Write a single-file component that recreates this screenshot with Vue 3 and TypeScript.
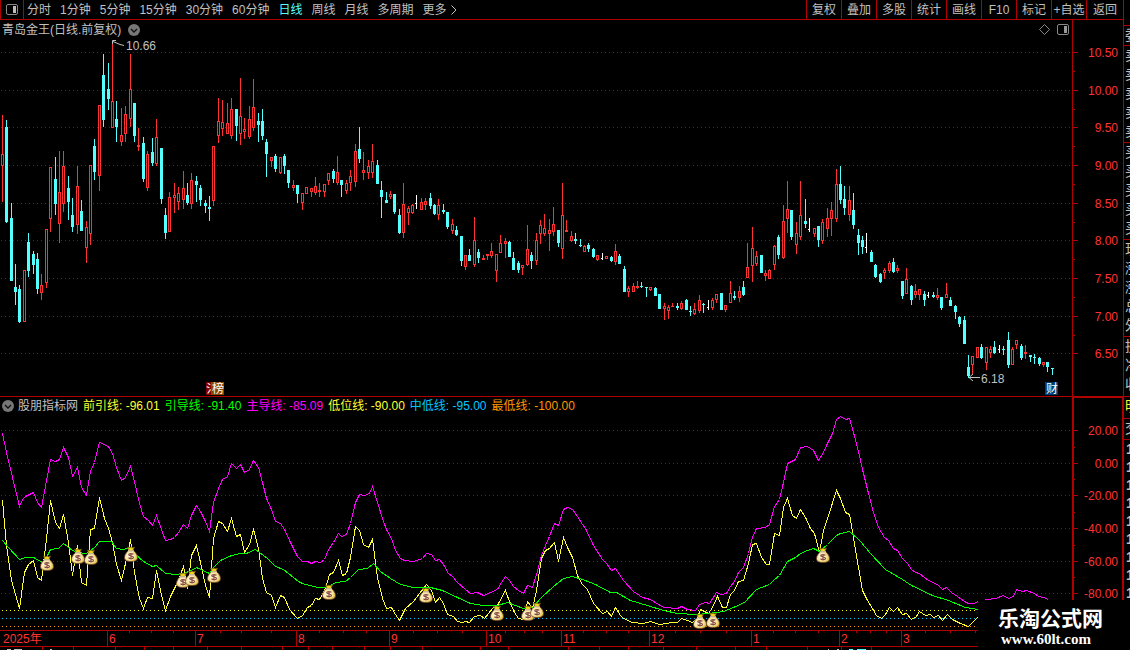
<script setup lang="ts">
type Kind = 'r' | 'c' | 'w'
interface Candle { kind: Kind; x: number; high: number; top: number; bottom: number; low: number }

const periods = ['分时', '1分钟', '5分钟', '15分钟', '30分钟', '60分钟', '日线', '周线', '月线', '多周期', '更多']
const tools = ['复权', '叠加', '多股', '统计', '画线', 'F10', '标记', '+自选', '返回']

// kind, high, body top, body bottom, low
const candleData = `
r 115 154 166 202|c 120 127 222 223|c 203 218 281 281|c 264 287 292 305|c 285 289 322 323|r 270 270 322 322|c 233 242 271 277|c 251 254 265 274|c 253 259 289 294|r 274 285 293 300|
r 229 229 283 288|r 167 167 219 232|c 157 179 204 215|r 151 192 224 243|r 151 166 204 212|c 176 188 202 220|c 198 215 227 232|r 166 186 225 234|c 200 211 231 231|r 221 227 248 263|
r 165 165 234 245|c 139 146 172 180|r 105 105 176 191|c 54 75 120 127|c 63 89 99 110|r 43 101 128 128|c 101 119 127 142|r 108 135 142 146|r 106 114 134 142|r 54 89 119 127|
c 103 103 136 142|r 128 145 147 151|c 137 143 179 182|r 151 154 188 191|c 138 152 163 166|r 119 137 164 166|c 148 148 199 204|c 208 215 233 239|r 192 197 232 232|r 183 195 198 213|
r 187 193 202 210|r 171 188 200 209|c 183 195 203 205|r 173 180 204 209|c 176 181 185 202|c 185 188 200 206|c 200 203 206 213|c 196 207 209 221|r 146 146 201 206|r 98 121 136 143|
r 100 122 129 136|r 103 123 134 134|r 98 109 136 139|c 109 109 126 141|r 78 116 134 145|r 118 129 132 139|r 106 119 137 139|r 79 107 128 131|c 113 121 125 142|c 109 121 136 140|
c 139 142 154 177|r 157 157 161 167|c 154 156 169 172|r 157 157 173 174|c 154 156 166 174|c 170 170 183 188|r 180 185 188 191|c 185 185 194 203|r 193 193 203 210|r 187 187 194 194|
r 188 188 192 197|r 177 186 193 195|r 183 190 192 197|r 184 184 192 197|r 173 173 181 185|c 169 171 179 183|r 156 172 183 185|c 180 180 185 197|r 180 183 191 194|r 170 176 183 191|
r 144 151 182 187|c 127 149 159 163|r 152 170 173 180|r 160 166 173 179|r 144 161 173 178|c 160 165 184 184|c 181 190 197 218|c 192 200 203 203|r 191 194 197 199|c 194 194 212 214|
c 209 215 233 234|r 183 204 233 238|r 206 208 213 225|r 204 205 213 214|w 195 203 204 209|r 198 202 210 210|r 198 201 205 210|c 193 198 206 209|c 204 205 214 215|r 199 205 215 220|
c 204 210 212 214|c 212 212 227 229|r 219 224 231 234|c 226 230 235 236|c 236 236 261 266|r 255 255 267 270|c 249 255 261 261|r 217 240 265 267|c 249 252 258 263|r 255 258 260 260|
r 254 254 256 260|r 243 251 256 258|r 254 254 271 282|r 235 243 253 253|r 238 241 244 258|c 241 242 257 257|c 252 258 270 270|c 261 263 270 273|r 265 265 268 275|r 225 249 265 266|
c 252 255 261 269|r 233 240 261 265|r 220 225 234 244|r 214 228 234 236|r 219 230 234 251|r 207 224 232 236|c 230 230 243 247|r 183 215 249 259|r 220 230 232 232|r 231 236 241 242|
c 233 239 241 244|c 239 245 246 247|r 245 246 252 252|c 243 245 249 252|c 248 249 257 258|r 255 255 260 261|w 253 258 259 260|r 256 256 259 259|c 256 257 261 262|r 244 251 262 265|
c 254 256 264 264|c 266 269 292 292|r 286 288 292 297|r 283 286 292 292|r 281 286 288 289|c 282 286 287 288|c 287 287 288 297|r 287 287 290 291|c 287 288 296 296|c 294 294 309 309|
r 303 306 309 320|r 305 307 311 319|r 303 306 307 307|c 303 306 308 310|r 301 303 309 310|c 299 300 310 310|c 306 311 312 316|r 303 309 314 315|r 295 300 311 313|c 303 304 305 313|
w 300 307 308 310|r 298 300 308 310|r 294 294 300 303|c 293 293 310 310|r 305 305 310 312|r 281 293 303 303|c 291 296 298 300|r 286 291 298 302|c 281 287 295 296|r 243 267 278 278|
r 227 248 266 282|r 251 256 264 266|c 255 255 273 273|r 270 273 276 281|r 269 270 279 279|r 245 246 265 270|c 235 237 255 259|r 205 221 258 259|r 181 209 219 233|c 210 210 237 240|
r 222 233 245 254|r 181 215 237 240|c 199 221 224 228|w 218 229 230 232|r 228 228 234 237|c 226 226 240 247|r 219 222 241 244|r 208 218 229 237|r 202 210 219 236|r 169 184 219 222|
c 166 184 200 204|c 186 199 208 215|r 186 200 215 221|c 193 210 225 229|c 229 235 243 255|c 236 240 247 254|w 233 247 248 253|c 250 252 262 262|c 264 265 277 278|c 273 274 282 283|
r 268 270 273 279|r 261 263 271 273|c 258 262 272 273|r 265 268 271 273|c 281 281 296 299|r 268 279 294 294|c 285 286 300 305|r 284 291 295 298|r 289 289 295 300|c 291 294 300 306|
w 292 295 296 298|c 292 295 297 298|r 288 295 298 300|c 297 297 308 310|r 283 294 298 298|c 297 300 306 306|c 305 306 312 319|c 316 317 324 327|c 316 320 344 344|c 355 367 376 378|
r 356 356 365 374|r 347 347 358 358|c 344 347 358 359|r 347 347 363 370|r 346 349 353 358|c 341 347 353 354|w 345 349 350 353|c 346 349 350 355|c 332 340 365 368|r 347 349 365 365|
r 340 340 345 349|c 344 346 358 360|r 345 352 354 359|c 355 355 357 362|c 354 357 358 364|c 357 358 364 366|r 362 362 365 367|c 362 362 367 372|c 368 368 369 375`

const candles: Candle[] = candleData.trim().split('|').map((row, i) => {
  const [kind, ...v] = row.trim().split(' ')
  const [high, top, bottom, low] = v.map(Number)
  return { kind: kind as Kind, x: Math.floor(2.2 + 4.412 * i), high, top, bottom, low }
})

function wicks(c: Candle): string {
  if (c.kind !== 'r') return `M${c.x} ${c.high}h1V${c.low}h-1z`
  return `M${c.x} ${c.high}h1V${c.top}h-1zM${c.x} ${c.bottom}h1V${c.low}h-1z`
}

// Hollow bodies are an outer ring minus the inner column.
function body(c: Candle): string {
  if (c.kind === 'w') return `M${c.x - 1} ${c.top}h2v1h-2z`
  const outer = `M${c.x - 1} ${c.top}h3V${c.bottom}h-3z`
  if (c.kind === 'c' || c.bottom - c.top < 3) return outer
  return `${outer}M${c.x} ${c.top + 1}h1V${c.bottom - 1}h-1z`
}

const path = (kind: Kind) => candles.filter(c => c.kind === kind).map(c => wicks(c)).join('')
const bodies = (kind: Kind) => candles.filter(c => c.kind === kind).map(c => body(c)).join('')
const layers = (['r', 'c', 'w'] as Kind[]).map(kind => ({ kind, wick: path(kind), body: bodies(kind) }))

const priceAxis = [
  { y: 52, t: '10.50' }, { y: 90, t: '10.00' }, { y: 127, t: '9.50' }, { y: 165, t: '9.00' }, { y: 203, t: '8.50' },
  { y: 240, t: '8.00' }, { y: 278, t: '7.50' }, { y: 316, t: '7.00' }, { y: 353, t: '6.50' },
]
const priceMinor = [71, 109, 146, 184, 222, 259, 297, 335]
const indAxis = [
  { y: 430, t: '20.00' }, { y: 463, t: '0.00' }, { y: 495, t: '-20.00' },
  { y: 528, t: '-40.00' }, { y: 561, t: '-60.00' }, { y: 593, t: '-80.00' },
]
const indMinor = [447, 479, 512, 545, 577]

const legend = [
  { cls: 'yellow', name: '前引线', value: '-96.01' },
  { cls: 'green', name: '引导线', value: '-91.40' },
  { cls: 'magenta', name: '主导线', value: '-85.09' },
  { cls: 'yellow', name: '低位线', value: '-90.00' },
  { cls: 'blue', name: '中低线', value: '-95.00' },
  { cls: 'orange', name: '最低线', value: '-100.00' },
]

const magenta = '2,433 6,452 19,506 22,499 25,496 33,492 37,502 41,507 50,459 55,461 59,459 63,447 68,457 72,476 77,467 81,487 86,495 90,471 94,462 99,442 108,446 112,453 116,467 121,480 125,477 130,466 134,481 139,503 143,516 148,520 152,525 156,515 161,529 165,540 170,539 174,537 178,532 183,524 187,528 191,515 196,505 200,511 205,521 209,531 213,502 218,488 222,479 227,476 231,463 236,468 240,464 244,472 249,469 253,460 258,467 262,482 266,498 271,509 275,521 280,523 284,529 290,542 297,556 302,561 307,561 311,563 315,561 320,562 324,559 328,549 333,542 338,533 341,536 346,534 350,523 355,502 359,494 364,495 369,493 372,486 377,502 382,518 386,529 391,538 395,550 400,558 404,560 413,561 422,558 426,553 431,554 435,560 439,559 443,564 448,573 452,576 457,582 465,589 470,593 477,592 483,595 490,592 497,589 501,582 505,576 509,580 513,586 518,590 523,593 527,585 532,587 536,574 541,555 545,545 549,536 554,523 558,525 563,509 567,507 572,509 577,516 582,524 585,528 593,545 602,559 606,563 611,570 615,568 623,580 633,591 642,597 650,599 663,607 677,608 681,606 687,609 695,610 699,604 705,602 709,603 716,592 721,594 726,593 730,586 734,581 738,572 743,567 748,553 752,537 756,528 765,527 769,524 774,506 779,499 783,482 787,463 795,459 800,447 807,446 813,450 818,460 823,452 827,443 832,433 836,419 840,416 845,419 849,418 853,432 858,451 862,469 867,489 873,512 878,527 884,537 888,540 893,548 897,550 902,558 907,563 911,569 915,572 919,573 924,577 928,580 937,584 942,589 946,587 951,592 957,596 964,601 968,603 973,603 978,601 987,599 995,598 1003,595 1008,598 1013,596 1016,589 1022,591 1026,590 1034,593 1038,596 1043,597 1048,599'
const yellow = '2,500 6,545 11,580 19,608 24,572 28,564 33,560 37,577 41,580 46,538 50,500 55,522 59,528 63,514 68,542 72,575 77,545 81,582 86,585 90,529 94,528 99,497 104,518 108,528 112,542 116,564 121,580 125,563 130,539 134,572 139,598 143,608 147,597 152,598 156,570 161,595 165,610 170,596 177,582 183,566 187,588 191,555 196,545 200,562 205,585 209,597 213,538 218,521 222,523 227,531 231,518 236,536 240,534 244,552 249,544 253,529 258,548 262,578 266,592 271,595 275,607 280,595 284,597 289,609 297,618 302,615 307,607 311,605 315,598 319,599 325,588 329,574 333,572 338,560 342,575 346,573 350,557 355,526 359,530 363,544 368,547 372,539 377,577 382,598 386,608 391,607 395,614 399,620 405,608 413,601 426,584 431,590 435,602 439,597 443,603 447,614 453,616 457,621 462,622 465,621 469,622 474,616 480,615 484,618 492,608 497,605 505,590 509,601 514,612 518,618 523,619 527,601 532,608 536,590 541,558 545,550 549,548 554,542 558,561 563,537 567,547 572,557 577,575 582,584 587,589 593,603 602,613 607,611 611,616 615,607 620,615 623,618 632,622 643,623 650,621 659,624 672,622 677,622 681,618 687,620 692,622 697,617 700,609 708,613 712,607 717,596 722,607 726,607 730,594 734,590 738,581 743,580 748,563 752,544 756,543 761,557 766,564 769,564 774,533 779,535 783,507 787,498 792,515 796,518 800,509 805,517 810,528 814,533 819,552 823,530 828,515 836,490 840,498 845,512 849,514 853,537 858,567 862,590 867,600 872,608 876,615 881,618 885,614 889,607 893,611 897,607 902,614 906,613 911,619 916,616 919,611 925,615 930,614 933,617 938,615 942,620 947,614 952,619 960,623 968,626 978,616'
const green = '2,540 8,547 19,559 25,557 33,557 42,562 46,557 50,549 58,548 63,543 72,550 77,552 86,553 94,547 99,541 111,541 116,548 123,549 130,547 134,553 143,561 152,566 156,565 165,573 175,574 183,573 191,570 196,567 209,573 213,567 220,560 231,555 240,553 246,553 255,549 259,552 267,558 275,566 283,569 298,581 302,583 317,587 327,587 335,582 345,581 350,577 358,569 367,568 373,563 380,571 390,578 400,584 413,587 430,587 442,590 457,597 470,603 483,605 497,605 507,602 523,608 532,607 541,597 553,586 563,578 572,576 582,579 595,584 610,592 616,592 630,600 647,605 663,610 677,613 695,614 708,613 723,611 733,607 744,602 756,589 769,584 774,579 779,575 787,561 795,557 800,553 807,550 813,548 819,551 827,544 836,535 840,533 849,531 857,538 860,541 870,553 885,569 902,579 911,585 932,595 948,600 965,607 978,609'

const bags = [
  [47, 563], [78, 556], [91, 557], [131, 554], [183, 580], [192, 578], [214, 575], [329, 592], [426, 595],
  [497, 613], [528, 613], [537, 610], [700, 621], [713, 620], [823, 555],
]

const months = [
  { x: 107, t: '6' }, { x: 195, t: '7' }, { x: 296, t: '8' }, { x: 389, t: '9' }, { x: 486, t: '10' },
  { x: 561, t: '11' }, { x: 649, t: '12' }, { x: 751, t: '1' }, { x: 839, t: '2' }, { x: 901, t: '3' },
]
const weekTicks = [129, 151, 173, 220, 241, 271, 319, 343, 366, 413, 437, 462, 505, 524, 542, 583, 606, 628, 675, 700, 726, 773, 795, 818, 856, 870, 886, 925, 950, 975]
const footTicks = [42, 73, 115, 144, 173, 207, 241, 282, 308, 332, 364, 390, 422, 480, 508, 568, 599, 628, 663, 696, 735, 766, 807, 841, 871]

const quoteRows = [
  ['委'], ['卖', '卖', '卖', '卖', '卖'], ['买', '买', '买', '买', '买'],
  ['现', '涨', '涨', '总', '外'], ['换', '净', '收'],
]
</script>

<template>
  <main class="page">
    <div class="left">
      <header class="toolbar">
        <button class="pane" aria-label="侧栏">
          <svg width="12" height="11" viewBox="0 0 12 11">
            <rect x="0.5" y="0.5" width="11" height="10" rx="1.5" fill="none" stroke="#888" />
            <rect x="7" y="2" width="3" height="7" fill="#bbb" />
          </svg>
        </button>
        <nav class="periods">
          <button v-for="p in periods" :key="p" :class="{ active: p === '日线' }">{{ p }}</button>
          <svg class="more" width="6" height="10" viewBox="0 0 6 10"><path d="M0.5 0.5L5 5L0.5 9.5" fill="none" stroke="#c0c0c0" /></svg>
        </nav>
        <div class="tools"><button v-for="t in tools" :key="t">{{ t }}</button></div>
      </header>

      <section class="panel">
        <div class="head">
          <span>青岛金王(日线.前复权)</span>
          <svg class="round" width="12" height="12" viewBox="0 0 12 12"><circle cx="6" cy="6" r="6" fill="#777" /><path d="M3 5L6 8L9 5" fill="none" stroke="#111" stroke-width="1.4" /></svg>
        </div>
        <svg class="chart" viewBox="0 20 1123 376">
          <g class="grid">
            <line v-for="a in priceAxis" :key="a.y" x1="1" x2="1072" :y1="a.y + 0.5" :y2="a.y + 0.5" />
          </g>
          <g v-for="l in layers" :key="l.kind" :class="['candles', l.kind]">
            <path :d="l.wick" />
            <path :d="l.body" fill-rule="evenodd" />
          </g>
          <g class="frame">
            <rect x="1072" y="20" width="1" height="376" />
            <rect v-for="a in priceAxis" :key="a.y" x="1073" :y="a.y" width="5" height="1" />
            <rect v-for="y in priceMinor" :key="y" x="1073" :y="y" width="2" height="1" />
          </g>
          <text v-for="a in priceAxis" :key="a.t" class="scale" x="1118" :y="a.y + 5">{{ a.t }}</text>
          <g class="note">
            <path d="M124 45.5L120 44.5L113 41.5M116 40.5H112.5V44" />
            <text x="126" y="50">10.66</text>
            <path d="M980 377.5H969M973 374L969 377.5L973 381" />
            <text x="981" y="383">6.18</text>
          </g>
          <g class="badge">
            <rect x="206" y="382" width="7" height="13" fill="#800000" />
            <text x="206" y="393">氵</text>
            <rect x="211" y="382" width="13" height="13" fill="#8a4500" />
            <text x="212" y="393">榜</text>
            <rect x="1045" y="382" width="13" height="13" fill="#003c70" />
            <text x="1046" y="393">财</text>
          </g>
          <g fill="none" stroke="#888">
            <path d="M1039.5 29.5L1044.5 24.5L1049.5 29.5L1044.5 34.5Z" />
            <rect x="1057.5" y="24.5" width="11" height="10" rx="1.5" />
            <rect x="1064" y="26" width="3" height="7" fill="#999" stroke="none" />
          </g>
        </svg>
      </section>

      <section class="panel">
        <div class="head low">
          <svg class="round" width="12" height="12" viewBox="0 0 12 12"><circle cx="6" cy="6" r="6" fill="#777" /><path d="M3 5L6 8L9 5" fill="none" stroke="#111" stroke-width="1.4" /></svg>
          <span>股朋指标网</span>
          <span v-for="l in legend" :key="l.name" :class="l.cls">{{ l.name }}: {{ l.value }}</span>
        </div>
        <svg class="chart" viewBox="0 396 1123 234">
          <g class="grid">
            <line v-for="a in indAxis" :key="a.y" x1="1" x2="1072" :y1="a.y + 0.5" :y2="a.y + 0.5" />
            <line class="level yellow" x1="2" x2="978" y1="610.5" y2="610.5" />
            <line class="level blue" x1="2" x2="978" y1="618.5" y2="618.5" />
            <line class="level orange" x1="2" x2="978" y1="626.5" y2="626.5" />
          </g>
          <g class="series" transform="translate(0.5 0.5)">
            <polyline class="yellow" :points="yellow" />
            <polyline class="green" :points="green" />
            <polyline class="magenta" :points="magenta" />
          </g>
          <defs>
            <radialGradient id="gold" cx="0.4" cy="0.45" r="0.65">
              <stop offset="0" stop-color="#fffbe8" /><stop offset="0.55" stop-color="#f6e8a6" /><stop offset="1" stop-color="#d9b632" />
            </radialGradient>
          </defs>
          <g v-for="(b, i) in bags" :key="i" :transform="`translate(${b[0]} ${b[1]})`">
            <path d="M-3 -3C-5 -1 -6.5 1 -6.5 3.5C-6.5 6.5 -4 7.5 0 7.5S6.5 6.5 6.5 3.5C6.5 1 5 -1 3 -3Z" fill="url(#gold)" stroke="#6d3b2e" stroke-width="0.8" />
            <path d="M-3.5 -7L-1.5 -6.3L0 -7L1.5 -6.3L3.5 -7L2 -3.5H-2Z" fill="#f2d21c" stroke="#6b4a10" stroke-width="0.7" />
            <path d="M-3 -3H3" stroke="#fff3d0" stroke-width="1.2" />
            <path d="M2.4 0.4C1.6 -0.6 -2.3 -0.8 -2.3 0.8C-2.3 2.4 2.5 1.6 2.5 3.4C2.5 5 -1.7 4.9 -2.5 3.7M0 -1V5.5" fill="none" stroke="#8a4a42" stroke-width="1.2" />
          </g>
          <g class="frame">
            <rect x="0" y="396" width="1123" height="1" />
            <rect x="1072" y="396" width="51" height="2" />
            <rect x="1072" y="396" width="2" height="234" />
            <rect x="1122" y="396" width="1" height="234" />
            <rect v-for="a in indAxis" :key="a.y" x="1073" :y="a.y" width="5" height="1" />
            <rect v-for="y in indMinor" :key="y" x="1073" :y="y" width="2" height="1" />
          </g>
          <text v-for="a in indAxis" :key="a.t" class="scale" x="1118" :y="a.y + 5">{{ a.t }}</text>
        </svg>
      </section>

      <svg class="chart" viewBox="0 630 1123 20">
        <g class="frame">
          <rect x="0" y="630" width="1123" height="1" />
          <rect x="0" y="646" width="1123" height="1" />
          <rect v-for="m in months" :key="m.x" :x="m.x" y="630" width="1" height="16" />
          <rect v-for="x in weekTicks" :key="x" :x="x" y="631" width="1" height="2" />
          <rect v-for="x in footTicks" :key="x" :x="x" y="647" width="1" height="3" />
        </g>
        <text class="date" x="3" y="643">2025年</text>
        <text v-for="m in months" :key="m.t" class="date" :x="m.x + 2" y="643">{{ m.t }}</text>
        <path d="M7 649.5h4m3 0h8m28 0h2M828 649.5h1m8 0h2" stroke="#c0c0c0" />
        <path d="M849 649.5h4m4 0h9" stroke="#54ffff" />
      </svg>
    </div>

    <aside class="quote">
      <div class="top"></div>
      <div v-for="(rows, i) in quoteRows" :key="i" class="block"><span v-for="(r, j) in rows" :key="j">{{ r }}</span></div>
      <div class="block tab"><span>明</span></div>
      <div class="block"><span>交</span></div>
      <div class="block ticks"><span v-for="n in 9" :key="n">1</span></div>
    </aside>

    <footer class="brand"><strong>乐淘公式网</strong><a href="#">www.60lt.com</a></footer>
  </main>
</template>

<style>
body { background: #000; }
</style>

<style scoped>
.page {
  position: relative;
  display: flex;
  min-height: 100vh;
  overflow: hidden;
  background: #000;
  color: #c0c0c0;
  font: 12px/18px "Liberation Sans", "Noto Sans CJK SC", sans-serif;
}
.left { flex: 1; min-width: 0; }
button { margin: 0; padding: 0; border: 0; background: none; color: inherit; font: inherit; white-space: nowrap; }
.toolbar { display: flex; height: 19px; border-bottom: 1px solid #b00000; }
.pane { display: flex; align-items: center; justify-content: center; width: 24px; border: solid #b00000; border-width: 0 1px; }
.periods { display: flex; flex: 1; align-items: center; gap: 9px; padding-left: 3px; }
.periods .active { color: #54ffff; }
.more { margin-left: -5px; }
.tools { display: flex; }
.tools button { width: 35px; border-left: 1px solid #b00000; }
.tools button:last-child { width: 37px; }
.panel { position: relative; }
.head { position: absolute; top: 0; left: 2px; display: flex; align-items: center; gap: 7px; height: 19px; white-space: nowrap; }
.head.low { gap: 5px; }
.head.low .round { margin-right: -1px; }
.chart { display: block; width: 100%; height: auto; }
.chart text { font-size: 12px; fill: #c0c0c0; }
.chart .scale { fill: #ff3232; text-anchor: end; }
.chart .date { fill: #ff3232; }
.grid line { stroke: #b00000; stroke-dasharray: 1 3; shape-rendering: crispEdges; }
.grid .level.yellow { stroke: #ffff00; }
.grid .level.blue { stroke: #00c8ff; }
.grid .level.orange { stroke: #ff9600; }
.candles { shape-rendering: crispEdges; }
.candles.r { fill: #ff3232; }
.candles.c { fill: #54ffff; }
.candles.w { fill: #fff; }
.frame { fill: #b00000; shape-rendering: crispEdges; }
.note path { fill: none; stroke: #c0c0c0; }
.badge text { fill: #fff; }
.series polyline { fill: none; stroke-width: 1; shape-rendering: crispEdges; }
.series .yellow { stroke: #ffff32; }
.series .green { stroke: #00ff00; }
.series .magenta { stroke: #ff00ff; }
.head .yellow { color: #ffff32; }
.head .green { color: #00ff00; }
.head .magenta { color: #ff00ff; }
.head .blue { color: #00c8ff; }
.head .orange { color: #ff9600; }
.quote { width: 6px; overflow: hidden; border-left: 1px solid #b00000; font-size: 14px; }
.quote .top { height: 25px; }
.block { border-top: 1px solid #b00000; padding-bottom: 1px; }
.block span { display: block; width: 14px; padding-left: 1px; line-height: 19px; }
.block:nth-child(2) { padding-bottom: 0; }
.block:nth-child(6) { padding-bottom: 2px; }
.tab { color: #ffff32; padding-bottom: 2px; }
.ticks { font-weight: bold; }
.ticks span { padding-left: 2px; line-height: 18px; }
.brand {
  position: absolute;
  right: 0;
  bottom: 0;
  display: flex;
  flex-direction: column;
  align-items: flex-start;
  box-sizing: border-box;
  width: 152px;
  height: 50px;
  padding: 8px 0 0 20px;
  background: #000;
  color: #fff;
}
.brand strong { font-size: 21px; line-height: 22px; font-weight: bold; }
.brand a { padding-left: 3px; color: #fff; font: bold 15px/18px "Liberation Serif", serif; text-decoration: none; }
</style>
